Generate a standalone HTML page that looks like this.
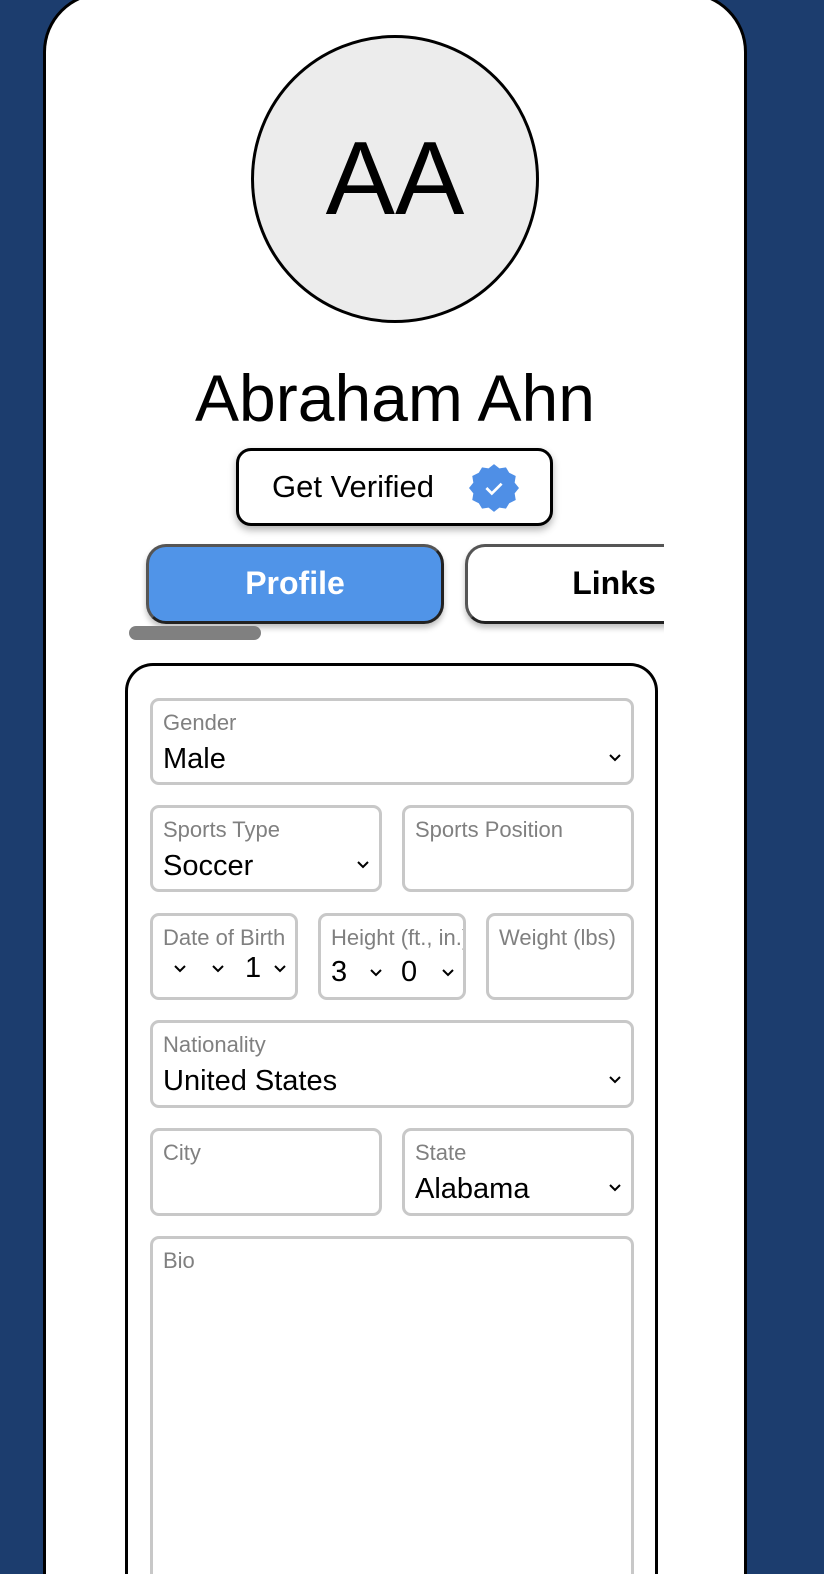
<!DOCTYPE html>
<html><head><style>
*{box-sizing:border-box;margin:0;padding:0}
html,body{width:824px;height:1574px;overflow:hidden}
body{background:#1c3d6e;position:relative;font-family:"Liberation Sans",sans-serif}
#w{position:absolute;left:0;top:0;width:824px;height:1574px;overflow:hidden}
.card{position:absolute;left:43px;top:-8px;width:704px;height:1582px;background:#fff;border:3px solid #000;border-bottom:none;border-radius:60px 60px 0 0}
.av{position:absolute;left:251px;top:35px;width:288px;height:288px;border-radius:50%;background:#ececec;border:3px solid #000;text-align:center;line-height:282px;font-size:104px;color:#000}
.name{position:absolute;left:0;width:790px;top:360px;text-align:center;font-size:66px;color:#000}
.gv{position:absolute;left:236px;top:448px;width:317px;height:78px;border:3px solid #000;border-radius:15px;background:#fff;box-shadow:0 4px 8px rgba(0,0,0,.3);font-size:31px;line-height:72px;padding-left:33px}
.badge{position:absolute;left:230px;top:12px;width:50px;height:50px}
.tab{position:absolute;top:544px;height:80px;border:3px solid #555;border-bottom-color:#222;border-right-color:#222;border-radius:20px;font-weight:bold;font-size:32px;text-align:center;line-height:72px;box-shadow:0 4px 6px rgba(0,0,0,.25)}
.clip{position:absolute;left:130px;top:530px;width:534px;height:110px;overflow:hidden}
.bar{position:absolute;left:129px;top:626px;width:132px;height:14px;border-radius:7px;background:#808080}
.panel{position:absolute;left:125px;top:663px;width:533px;height:911px;border:3px solid #000;border-bottom:none;border-radius:28px 28px 0 0;background:#fff}
.f{position:absolute;border:3px solid #c8c8c8;border-radius:9px;background:#fff;overflow:hidden}
.l{position:absolute;left:10px;top:9px;font-size:22px;color:#808080;white-space:nowrap}
.v{position:absolute;left:10px;top:42px;font-size:29px;color:#000;white-space:nowrap}
.c{position:absolute;width:14px;height:14px}
</style></head><body><div id="w">
<div class="card"></div>
<div class="av">AA</div>
<div class="name">Abraham Ahn</div>
<div class="gv">Get Verified
<svg class="badge" viewBox="0 0 46 46"><path fill="#4f8fe6" d="M23 1l5 4 6-1 3 5 6 3-1 6 4 5-4 5 1 6-6 3-3 5-6-1-5 4-5-4-6 1-3-5-6-3 1-6-4-5 4-5-1-6 6-3 3-5 6 1z"/><path d="M16 23l5 5 9-9" stroke="#fff" stroke-width="2.5" fill="none"/></svg></div>
<div class="clip">
<div class="tab" style="left:16px;top:14px;width:298px;background:#5094e8;color:#fff">Profile</div>
<div class="tab" style="left:335px;top:14px;width:298px;background:#fff;color:#000">Links</div>
</div>
<div class="bar"></div>
<div class="panel"></div>
<svg width="0" height="0" style="position:absolute"><defs><path id="cv" d="M2 4l5 5 5-5" stroke="#000" stroke-width="2" fill="none"/></defs></svg>
<div class="f" style="left:150px;top:698px;width:484px;height:87px"><span class="l">Gender</span><span class="v">Male</span><svg class="c" style="left:455px;top:50px"><use href="#cv"/></svg></div>
<div class="f" style="left:150px;top:805px;width:232px;height:87px"><span class="l">Sports Type</span><span class="v">Soccer</span><svg class="c" style="left:203px;top:50px"><use href="#cv"/></svg></div>
<div class="f" style="left:402px;top:805px;width:232px;height:87px"><span class="l">Sports Position</span></div>
<div class="f" style="left:150px;top:913px;width:148px;height:87px"><span class="l">Date of Birth</span><svg class="c" style="left:20px;top:46px"><use href="#cv"/></svg><svg class="c" style="left:58px;top:46px"><use href="#cv"/></svg><span class="v" style="left:92px;top:36px">1</span><svg class="c" style="left:120px;top:46px"><use href="#cv"/></svg></div>
<div class="f" style="left:318px;top:913px;width:148px;height:87px"><span class="l">Height (ft., in.)</span><span class="v" style="top:40px">3</span><svg class="c" style="left:48px;top:50px"><use href="#cv"/></svg><span class="v" style="left:80px;top:40px">0</span><svg class="c" style="left:120px;top:50px"><use href="#cv"/></svg></div>
<div class="f" style="left:486px;top:913px;width:148px;height:87px"><span class="l">Weight (lbs)</span></div>
<div class="f" style="left:150px;top:1020px;width:484px;height:88px"><span class="l">Nationality</span><span class="v">United States</span><svg class="c" style="left:455px;top:50px"><use href="#cv"/></svg></div>
<div class="f" style="left:150px;top:1128px;width:232px;height:88px"><span class="l">City</span></div>
<div class="f" style="left:402px;top:1128px;width:232px;height:88px"><span class="l">State</span><span class="v">Alabama</span><svg class="c" style="left:203px;top:50px"><use href="#cv"/></svg></div>
<div class="f" style="left:150px;top:1236px;width:484px;height:338px;border-bottom:none;border-radius:9px 9px 0 0"><span class="l">Bio</span></div>
</div></body></html>
